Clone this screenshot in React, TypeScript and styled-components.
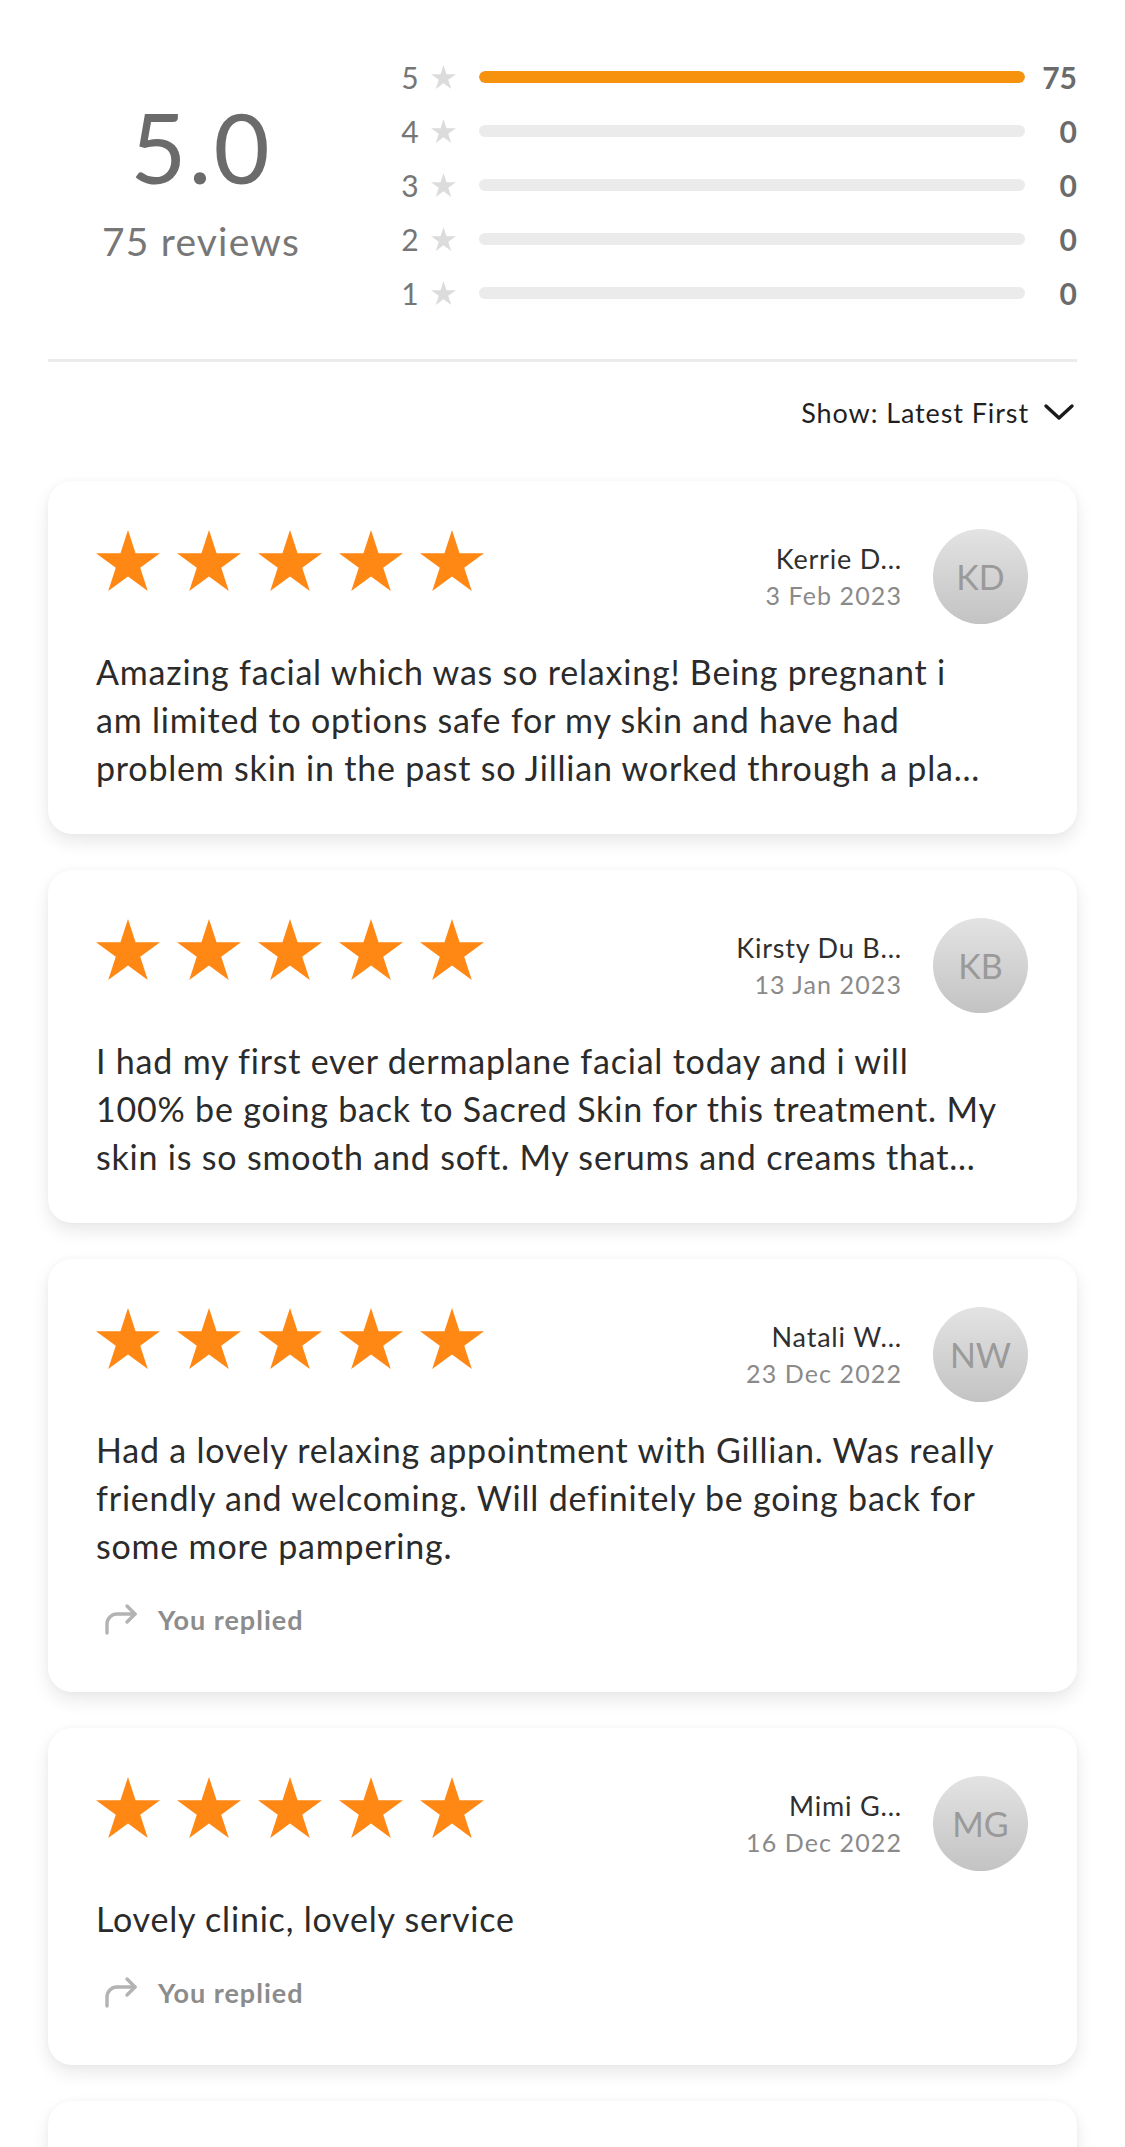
import React from "react";
import styled, { createGlobalStyle } from "styled-components";

const GlobalStyle = createGlobalStyle`
  html, body { margin: 0; padding: 0; background: #ffffff; }
  body { font-family: "Lato", "Noto Sans", sans-serif; color: #2b2b2b; }
  * { box-sizing: border-box; }
`;

const Page = styled.div`
  padding: 0 48px;
  width: 1125px;
  overflow: hidden;
`;

const Summary = styled.section`
  display: flex;
  align-items: center;
  padding: 50px 0 39px;
  border-bottom: 3px solid #ebebeb;
`;

const Average = styled.div`
  width: 306px;
  display: flex;
  flex-direction: column;
  align-items: center;
  margin-right: 44px;
  padding-bottom: 12px;
`;

const BigScore = styled.div`
  font-size: 97px;
  line-height: 1;
  color: #6b6b6b;
  letter-spacing: 2px;
`;

const ReviewCount = styled.div`
  margin-top: 27px;
  font-size: 39px;
  line-height: 1;
  letter-spacing: 1.2px;
  color: #777777;
`;

const Bars = styled.div`
  flex: 1;
  display: flex;
  flex-direction: column;
`;

const BarRow = styled.div`
  height: 54px;
  display: flex;
  align-items: center;
`;

const BarDigit = styled.span`
  width: 24px;
  text-align: center;
  font-size: 30px;
  color: #767676;
`;

const SmallStar = styled.svg`
  width: 25px;
  height: 24px;
  margin: 0 23px 0 9px;
  fill: #dcdcdc;
`;

const Track = styled.div`
  flex: 1;
  height: 12px;
  border-radius: 6px;
  background: #ebebeb;
  overflow: hidden;
`;

const Fill = styled.div`
  height: 100%;
  border-radius: 6px;
  background: #f7920f;
`;

const BarCount = styled.span`
  width: 52px;
  text-align: right;
  font-size: 30px;
  font-weight: 700;
  color: #6b6b6b;
`;

const SortRow = styled.div`
  display: flex;
  justify-content: flex-end;
  align-items: center;
  gap: 14px;
  padding: 36px 2px 0 0;
  height: 64px;
  margin-bottom: 55px;
  font-size: 27px;
  letter-spacing: 0.9px;
  color: #1f1f1f;
`;

const Chevron = styled.svg`
  width: 32px;
  height: 18px;
  stroke: #1a1a1a;
  stroke-width: 3.4;
  fill: none;
  stroke-linecap: round;
  stroke-linejoin: round;
`;

const CardList = styled.div`
  display: flex;
  flex-direction: column;
  gap: 36px;
  padding-bottom: 60px;
`;

const Card = styled.article`
  background: #ffffff;
  border-radius: 24px;
  padding: 48px 48px 42px;
  box-shadow: 0 8px 18px rgba(0, 0, 0, 0.09), 0 0 6px rgba(0, 0, 0, 0.03);
`;

const EmptyCard = styled(Card)`
  height: 300px;
`;

const CardHeader = styled.div`
  display: flex;
  justify-content: space-between;
  align-items: flex-start;
`;

const StarRow = styled.div`
  display: flex;
  gap: 17px;
  padding-top: 1px;
`;

const BigStar = styled.svg`
  width: 64px;
  height: 61px;
  fill: #ff8714;
`;

const Author = styled.div`
  display: flex;
  align-items: center;
  gap: 31px;
  margin-right: 1px;
`;

const Meta = styled.div`
  display: flex;
  flex-direction: column;
  align-items: flex-end;
`;

const Name = styled.div`
  font-size: 27px;
  line-height: 36px;
  letter-spacing: 0.8px;
  color: #2f2f2f;
`;

const DateText = styled.div`
  font-size: 25px;
  line-height: 36px;
  letter-spacing: 1.1px;
  color: #8a8a8a;
`;

const Avatar = styled.div`
  width: 95px;
  height: 95px;
  border-radius: 50%;
  background: linear-gradient(180deg, #e3e3e3 0%, #c3c3c3 100%);
  display: flex;
  align-items: center;
  justify-content: center;
  font-size: 34px;
  color: #9a9a9a;
`;

const Body = styled.p`
  margin: 24px 0 0;
  font-size: 34px;
  line-height: 48px;
  letter-spacing: 0.8px;
  color: #2b2b2b;
  white-space: pre-line;
`;

const Replied = styled.div`
  display: flex;
  align-items: center;
  gap: 20px;
  height: 36px;
  margin: 31px 0 13px 8px;
  font-size: 27px;
  font-weight: 700;
  letter-spacing: 1px;
  color: #8c8c8c;
`;

const ReplyIcon = styled.svg`
  width: 34px;
  height: 32px;
  fill: none;
  stroke: #b3b3b3;
  stroke-width: 3.4;
  stroke-linecap: round;
  stroke-linejoin: round;
`;

const STAR_POINTS =
  "50,0 61.23,34.55 97.55,34.55 68.17,55.9 79.39,90.45 50,69.1 20.61,90.45 31.83,55.9 2.45,34.55 38.77,34.55";

type Review = {
  name: string;
  date: string;
  initials: string;
  text: string;
  replied?: boolean;
};

const reviews: Review[] = [
  {
    name: "Kerrie D...",
    date: "3 Feb 2023",
    initials: "KD",
    text:
      "Amazing facial which was so relaxing! Being pregnant i\nam limited to options safe for my skin and have had\nproblem skin in the past so Jillian worked through a pla...",
  },
  {
    name: "Kirsty Du B...",
    date: "13 Jan 2023",
    initials: "KB",
    text:
      "I had my first ever dermaplane facial today and i will\n100% be going back to Sacred Skin for this treatment. My\nskin is so smooth and soft. My serums and creams that...",
  },
  {
    name: "Natali W...",
    date: "23 Dec 2022",
    initials: "NW",
    text:
      "Had a lovely relaxing appointment with Gillian. Was really\nfriendly and welcoming. Will definitely be going back for\nsome more pampering.",
    replied: true,
  },
  {
    name: "Mimi G...",
    date: "16 Dec 2022",
    initials: "MG",
    text: "Lovely clinic, lovely service",
    replied: true,
  },
];

const distribution = [
  { stars: 5, count: 75 },
  { stars: 4, count: 0 },
  { stars: 3, count: 0 },
  { stars: 2, count: 0 },
  { stars: 1, count: 0 },
];

const total = 75;

function Star() {
  return (
    <BigStar viewBox="2.45 0 95.1 90.45">
      <polygon points={STAR_POINTS} />
    </BigStar>
  );
}

function ReviewCard({ review }: { review: Review }) {
  return (
    <Card>
      <CardHeader>
        <StarRow>
          {[0, 1, 2, 3, 4].map((i) => (
            <Star key={i} />
          ))}
        </StarRow>
        <Author>
          <Meta>
            <Name>{review.name}</Name>
            <DateText>{review.date}</DateText>
          </Meta>
          <Avatar>{review.initials}</Avatar>
        </Author>
      </CardHeader>
      <Body>{review.text}</Body>
      {review.replied && (
        <Replied>
          <ReplyIcon viewBox="0 0 34 32">
            <path d="M3 30 V21 a10 10 0 0 1 10 -10 H31" />
            <polyline points="23 3 31 11 23 19" />
          </ReplyIcon>
          You replied
        </Replied>
      )}
    </Card>
  );
}

export default function App() {
  return (
    <>
      <GlobalStyle />
      <Page>
        <Summary>
          <Average>
            <BigScore>5.0</BigScore>
            <ReviewCount>75 reviews</ReviewCount>
          </Average>
          <Bars>
            {distribution.map((row) => (
              <BarRow key={row.stars}>
                <BarDigit>{row.stars}</BarDigit>
                <SmallStar viewBox="2.45 0 95.1 90.45">
                  <polygon points={STAR_POINTS} />
                </SmallStar>
                <Track>
                  <Fill style={{ width: `${(row.count / total) * 100}%` }} />
                </Track>
                <BarCount>{row.count}</BarCount>
              </BarRow>
            ))}
          </Bars>
        </Summary>
        <SortRow>
          Show: Latest First
          <Chevron viewBox="0 0 32 18">
            <polyline points="3 3 16 15 29 3" />
          </Chevron>
        </SortRow>
        <CardList>
          {reviews.map((r) => (
            <ReviewCard key={r.name} review={r} />
          ))}
          <EmptyCard />
        </CardList>
      </Page>
    </>
  );
}
